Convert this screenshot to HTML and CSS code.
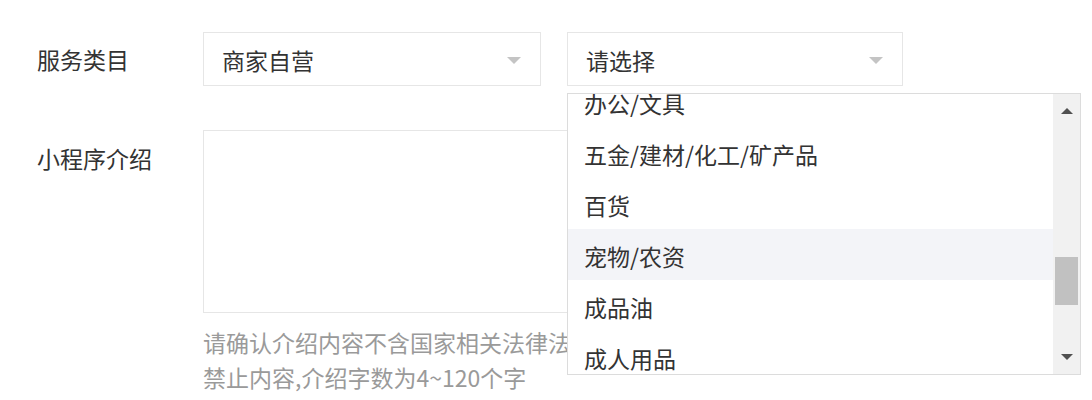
FILE: index.html
```html
<!DOCTYPE html>
<html lang="zh-CN">
<head>
<meta charset="utf-8">
<title>服务类目</title>
<link rel="stylesheet" href="styles.css">
</head>
<body>
<div class="form">
  <div class="row">
    <div class="label">服务类目</div>
    <div class="selects">
      <div class="select">
        <span class="value">商家自营</span>
        <span class="caret"></span>
      </div>
      <div class="select-wrap">
        <div class="select">
          <span class="value">请选择</span>
          <span class="caret"></span>
        </div>
        <div class="dropdown">
          <div class="list">
            <ul class="items">
              <li class="item">办公/文具</li>
              <li class="item">五金/建材/化工/矿产品</li>
              <li class="item">百货</li>
              <li class="item hover">宠物/农资</li>
              <li class="item">成品油</li>
              <li class="item">成人用品</li>
            </ul>
          </div>
          <div class="scrollbar">
            <span class="arrow up"></span>
            <div class="track"><div class="thumb"></div></div>
            <span class="arrow down"></span>
          </div>
        </div>
      </div>
    </div>
  </div>
  <div class="row row-intro">
    <div class="label label-intro">小程序介绍</div>
    <div class="field">
      <div class="textarea"></div>
      <p class="hint">请确认介绍内容不含国家相关法律法规禁止内容,介绍字数为4~120个字</p>
    </div>
  </div>
</div>
</body>
</html>
```

FILE: styles.css
```css
* { box-sizing: border-box; }
html, body {
  margin: 0;
  padding: 0;
  background: #ffffff;
}
body {
  font-family: "Noto Sans CJK SC", "Noto Sans", sans-serif;
  font-size: 23px;
  color: #333333;
}
.form {
  padding: 32px 0 0 37px;
}
.row {
  display: flex;
}
.label {
  width: 166px;
  flex: none;
  line-height: 54px;
  color: #333333;
}
.selects {
  display: flex;
  gap: 26px;
}
.select {
  width: 338px;
  height: 54px;
  border: 1px solid #e6e6e6;
  display: flex;
  align-items: center;
  justify-content: space-between;
  padding: 0 19px 0 18px;
  background: #fff;
}
.select-wrap {
  position: relative;
}
.select-wrap .select {
  width: 336px;
}
.value {
  color: #333333;
  line-height: 1;
  padding-top: 3px;
}
.caret {
  width: 0;
  height: 0;
  border-left: 7px solid transparent;
  border-right: 7px solid transparent;
  border-top: 7px solid #c4c4c4;
  margin-top: 2px;
}
.dropdown {
  position: absolute;
  left: 0;
  top: 61px;
  width: 514px;
  height: 282px;
  border: 1px solid #dcdcdc;
  background: #fff;
  display: flex;
  z-index: 10;
}
.list {
  flex: 1;
  overflow: hidden;
}
.items {
  list-style: none;
  margin: -18px 0 0 0;
  padding: 0;
}
.item {
  height: 51px;
  line-height: 51px;
  padding-left: 16px;
  padding-top: 2px;
  color: #333333;
  white-space: nowrap;
}
.item.hover {
  background: #f3f4f8;
}
.scrollbar {
  width: 27px;
  flex: none;
  background: #f1f1f1;
  display: flex;
  flex-direction: column;
  align-items: center;
}
.arrow {
  width: 0;
  height: 0;
  border-left: 6px solid transparent;
  border-right: 6px solid transparent;
}
.arrow.up {
  border-bottom: 6px solid #505050;
  margin-top: 14px;
}
.arrow.down {
  border-top: 6px solid #505050;
  margin-bottom: 14px;
}
.track {
  flex: 1;
  width: 100%;
  display: flex;
  flex-direction: column;
  justify-content: flex-end;
  padding: 0 2px 49px 2px;
}
.thumb {
  height: 48px;
  background: #c1c1c1;
}
.row-intro {
  margin-top: 44px;
}
.label-intro {
  line-height: 30px;
  padding-top: 13px;
}
.field {
  display: flex;
  flex-direction: column;
}
.textarea {
  width: 700px;
  height: 183px;
  border: 1px solid #e6e6e6;
  background: #fff;
}
.hint {
  margin: 12px 0 0 0;
  width: 392px;
  line-height: 35px;
  color: #9a9a9a;
  font-size: 23px;
}
```
